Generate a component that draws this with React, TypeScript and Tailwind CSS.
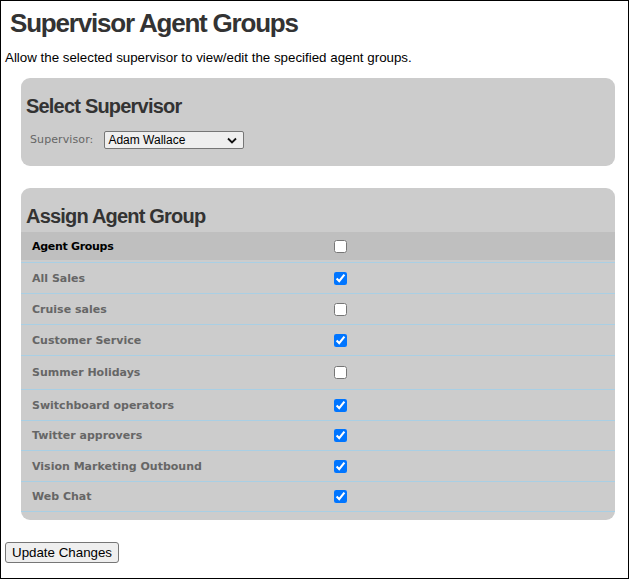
import React from 'react';

const groups: { name: string; checked: boolean; h: string }[] = [
  { name: 'All Sales', checked: true, h: 'h-[31px]' },
  { name: 'Cruise sales', checked: false, h: 'h-[31px]' },
  { name: 'Customer Service', checked: true, h: 'h-[31px]' },
  { name: 'Summer Holidays', checked: false, h: 'h-[34px]' },
  { name: 'Switchboard operators', checked: true, h: 'h-[31px]' },
  { name: 'Twitter approvers', checked: true, h: 'h-[30px]' },
  { name: 'Vision Marketing Outbound', checked: true, h: 'h-[31px]' },
  { name: 'Web Chat', checked: true, h: 'h-[30px]' },
];

function PanelHeading({ children }: { children: React.ReactNode }) {
  return (
    <h2 className="pl-[5px] font-['Liberation_Sans',Arial,sans-serif] text-[20px] font-bold leading-[24px] tracking-[-0.8px] text-[#333]">
      {children}
    </h2>
  );
}

export default function App() {
  return (
    <div className="h-[579px] w-[629px] border border-black bg-white font-['Liberation_Sans',Arial,sans-serif]">
      <h1 className="ml-[9px] mt-[7px] text-[26px] font-bold leading-[30px] tracking-[-1.2px] text-[#333]">
        Supervisor Agent Groups
      </h1>
      <p className="ml-[4px] mt-[12px] text-[13.33px] leading-[16px] text-black">
        Allow the selected supervisor to view/edit the specified agent groups.
      </p>

      {/* Select Supervisor */}
      <div className="ml-[20px] mt-[12px] w-[594px] rounded-[9px] bg-[#cccccc] pb-[17px] pt-[16px]">
        <PanelHeading>Select Supervisor</PanelHeading>
        <div className="mt-[13px] flex items-center pl-[9px]">
          <span className="font-['DejaVu_Sans',Verdana,sans-serif] text-[11px] tracking-[0.1px] text-[#666]">
            Supervisor:
          </span>
          <span className="relative ml-[11px] flex h-[18px] w-[140px] items-center rounded-[2px] border border-[#767676] bg-[#efefef]">
            <select
              defaultValue="Adam Wallace"
              className="h-full w-full appearance-none bg-transparent pl-[3px] text-[12px] leading-[16px] text-black outline-none"
            >
              <option>Adam Wallace</option>
            </select>
            <svg
              className="pointer-events-none absolute right-[6px] top-[5px]"
              width="10"
              height="7"
              viewBox="0 0 10 7"
            >
              <path d="M1 1.5 L5 5.5 L9 1.5" fill="none" stroke="#111" strokeWidth="1.8" />
            </svg>
          </span>
        </div>
      </div>

      {/* Assign Agent Group */}
      <div className="ml-[20px] mt-[22px] w-[594px] rounded-[9px] bg-[#cccccc] pb-[8px] pt-[16px]">
        <PanelHeading>Assign Agent Group</PanelHeading>
        <div className="mt-[4px] grid h-[28px] grid-cols-[313px_1fr] items-center bg-[#bfbfbf]">
          <span className="pl-[11px] pt-[2px] font-['DejaVu_Sans',Verdana,sans-serif] text-[11px] font-bold tracking-[-0.3px] text-black">
            Agent Groups
          </span>
          <span className="flex">
            <input type="checkbox" className="m-0 h-[13px] w-[13px]" />
          </span>
        </div>
        <div className="mt-[2px] border-t border-[#a9cfe4]">
          {groups.map((g) => (
            <div
              key={g.name}
              className={`grid grid-cols-[313px_1fr] items-center border-b border-[#a9cfe4] ${g.h}`}
            >
              <span className="pl-[11px] pt-[2px] font-['DejaVu_Sans',Verdana,sans-serif] text-[11px] font-bold text-[#666]">
                {g.name}
              </span>
              <span className="flex">
                <input
                  type="checkbox"
                  defaultChecked={g.checked}
                  className="m-0 h-[13px] w-[13px]"
                />
              </span>
            </div>
          ))}
        </div>
      </div>

      <button className="ml-[4px] mt-[22px] h-[21px] rounded-[3px] border border-[#767676] bg-[#efefef] px-[6px] text-[13.33px] leading-[17px] text-black">
        Update Changes
      </button>
    </div>
  );
}
